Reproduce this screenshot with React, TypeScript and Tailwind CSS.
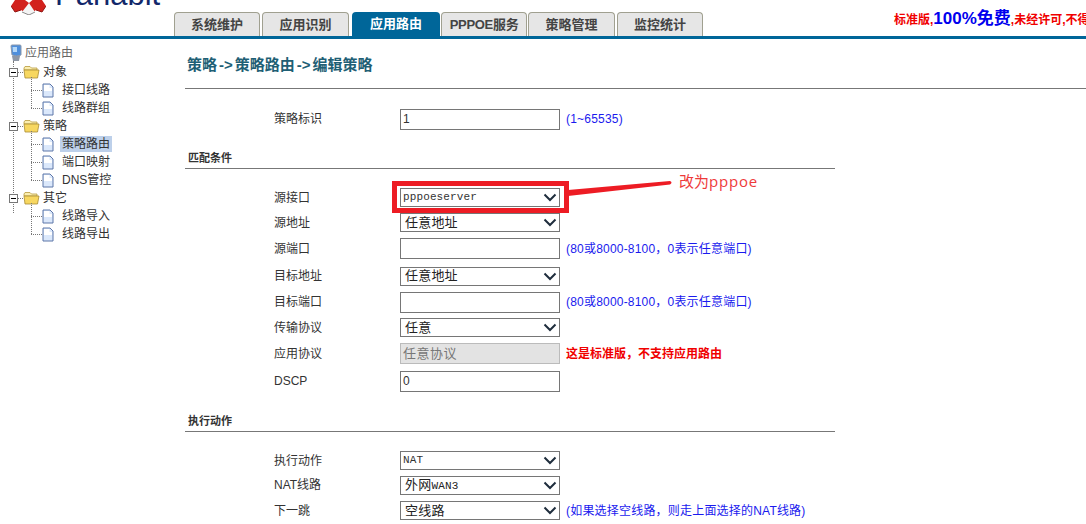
import React from 'react';

const ZH = "font-['Liberation_Sans','Noto_Sans_CJK_SC',sans-serif]";

const tabs = [
  { label: '系统维护', cls: 'w-[86px]' },
  { label: '应用识别', cls: 'w-[87px] ml-[2px]' },
  { label: '应用路由', cls: 'w-[88px] ml-[3px]', active: true },
  { label: 'PPPOE服务', cls: 'w-[86px] ml-[1px] tracking-[-0.3px]' },
  { label: '策略管理', cls: 'w-[87px] ml-[1px]' },
  { label: '监控统计', cls: 'w-[86px] ml-[2px]' },
];

const Logo = () => (
  <svg width="35" height="15" viewBox="0 0 35 15" className="shrink-0">
    <path d="M0 6 L6 -3 H29 L35 6 L31 12 L25 10 L18 15 L10 10 L4 12 Z" fill="#d2211c" />
    <path d="M10 -3 H25 L18 3 Z" fill="#ffffff" />
    <path d="M18 3 L24 12 L18 15 L11 12 Z" fill="#f4f4f4" />
    <path d="M11 12 L18 15 L24 12" fill="none" stroke="#8a8a8a" strokeWidth="1" />
    <path d="M0 6 L4 12 L10 10 M35 6 L31 12 L25 10" fill="none" stroke="#8f1512" strokeWidth="1" />
  </svg>
);

const Minus = () => (
  <span className="relative z-10 w-[9px] h-[9px] border border-[#777] bg-white flex items-center justify-center shrink-0">
    <span className="w-[5px] h-px bg-black" />
  </span>
);

const Folder = () => (
  <svg width="17" height="14" viewBox="0 0 17 14" className="shrink-0">
    <path d="M1 3 L2 1.5 H7 L8.5 3 H14 V5 H1 Z" fill="#fbeeb0" stroke="#b89a3c" strokeWidth="0.8" />
    <path d="M1 5 H16 L14.5 13 H2 Z" fill="#f7d760" stroke="#a88c34" strokeWidth="0.8" />
  </svg>
);

const Page = () => (
  <svg width="12" height="15" viewBox="0 0 12 15" className="shrink-0">
    <path d="M1 1 H8 L11 4 V14 H1 Z" fill="#dbe8fb" stroke="#5d76a8" strokeWidth="1" />
    <path d="M2 2 H7.5 V5 H10 V8 L2 8 Z" fill="#ffffff" />
  </svg>
);

const Computer = () => (
  <svg width="13" height="18" viewBox="0 0 13 18" className="shrink-0">
    <path d="M2 2 Q2 1 3 1 H11 Q12 1 12 2 V11 Q8 13 3 11 Z" fill="#4f8fdc" stroke="#8a97aa" strokeWidth="1" />
    <path d="M3.5 3 H8 V8 H4 Z" fill="#b4d8f8" />
    <path d="M3 12 H11 L10 17 H4 Z" fill="#8f98a6" />
  </svg>
);

const Group = ({ name, items }: { name: string; items: { label: string; selected?: boolean }[] }) => (
  <div>
    <div className="h-[18px] flex items-center">
      <Minus />
      <span className="w-[5px] border-t border-dotted border-[#777]" />
      <Folder />
      <span className="ml-[3px] text-[12px] text-[#333]">{name}</span>
    </div>
    <div className="relative ml-[22px]">
      <span
        className="absolute left-0 -top-[4px] border-l border-dotted border-[#777]"
        style={{ height: items.length * 18 - 5 }}
      />
      {items.map((item) => (
        <div key={item.label} className="h-[18px] flex items-center">
          <span className="w-[11px] border-t border-dotted border-[#777]" />
          <Page />
          <span className={`ml-[6px] px-[2px] text-[12px] leading-[16px] text-[#333] ${item.selected ? 'bg-[#bdd0ea]' : ''}`}>
            {item.label}
          </span>
        </div>
      ))}
    </div>
  </div>
);

const Sidebar = () => (
  <aside className="w-[185px] shrink-0 pl-[9px] pt-[4px]">
    <div className="h-[19px] flex items-center gap-[3px]">
      <Computer />
      <span className="text-[12px] text-[#666]">应用路由</span>
    </div>
    <div className="relative pt-[1px]">
      <span className="absolute left-[4px] -top-[1px] h-[152px] border-l border-dotted border-[#777]" />
      <Group name="对象" items={[{ label: '接口线路' }, { label: '线路群组' }]} />
      <Group name="策略" items={[{ label: '策略路由', selected: true }, { label: '端口映射' }, { label: 'DNS管控' }]} />
      <Group name="其它" items={[{ label: '线路导入' }, { label: '线路导出' }]} />
    </div>
  </aside>
);

const Chevron = () => (
  <svg width="14" height="9" viewBox="0 0 14 9" className="shrink-0">
    <path d="M1.5 1.5 L7 7 L12.5 1.5" fill="none" stroke="#1f2d3d" strokeWidth="2" />
  </svg>
);

const Select = ({ value, mono }: { value: React.ReactNode; mono?: boolean }) => (
  <div className={`w-[160px] h-[19px] border border-[#767676] bg-white flex items-center justify-between pr-[2px] ${mono ? 'pl-[2px]' : 'pl-[4px]'}`}>
    {mono ? (
      <span className="font-['Liberation_Mono',monospace] text-[11px] tracking-[0.12px] text-[#333]">{value}</span>
    ) : (
      <span className="text-[13px] tracking-[0.2px] text-[#222]">{value}</span>
    )}
    <Chevron />
  </div>
);

const TextInput = ({ value }: { value?: string }) => (
  <div className="w-[160px] h-[21px] border border-[#767676] bg-white pl-[2px] text-[12px] leading-[19px] text-[#333]">
    {value}
  </div>
);

const Row = ({ label, h, children, hint, hintRed }: {
  label: string;
  h: string;
  children: React.ReactNode;
  hint?: string;
  hintRed?: boolean;
}) => (
  <div className={`${h} flex items-center pl-[89px]`}>
    <span className="w-[126px] shrink-0 text-[12px] text-[#333]">{label}</span>
    {children}
    {hint && (
      <span className={`ml-[6px] text-[12px] ${hintRed ? 'font-bold text-[#f00000]' : 'tracking-[0.2px] text-[#1a1aee]'}`}>{hint}</span>
    )}
  </div>
);

const Section = ({ title, className }: { title: string; className: string }) => (
  <div className={`w-[650px] h-[22px] border-b border-[#777] pl-[3px] text-[11px] leading-[23px] font-bold text-[#333] ${className}`}>
    {title}
  </div>
);

export default function App() {
  return (
    <div className={`relative w-[1086px] h-[524px] overflow-hidden bg-white ${ZH}`}>
      <header className="h-[39px] border-b-[3px] border-[#006699] flex items-end overflow-hidden">
        <div className="w-[174px] shrink-0 h-[36px] flex items-start pl-[11px] overflow-hidden">
          <Logo />
          <span className="ml-[9px] -mt-[25px] text-[31px] leading-[40px] text-[#12286a]">Panabit</span>
        </div>
        <nav className="flex items-end h-[24px]">
          {tabs.map((t) => (
            <div
              key={t.label}
              className={`${t.cls} h-[24px] flex items-center justify-center rounded-t-[4px] text-[13px] font-bold ${
                t.active
                  ? 'bg-[#006699] text-white'
                  : 'bg-[#e6e6e6] text-[#444] border border-b-0 border-[#a0a090]'
              }`}
            >
              {t.label}
            </div>
          ))}
        </nav>
        <div className="ml-[191px] h-[36px] pt-[6px] whitespace-nowrap text-[12px] font-bold text-[#f00000] flex items-baseline">
          <span>标准版,</span>
          <span className="text-[17px] text-[#0000ee]">100%免费</span>
          <span>,未经许可,不得</span>
        </div>
      </header>

      <div className="flex">
        <Sidebar />
        <main className="flex-1">
          <div className="h-[50px] pl-[2px] border-b border-[#777] pt-[16px] text-[15px] font-bold leading-[20px] text-[#1f5f75]">
            策略<span className="mx-[2px]">-&gt;</span>策略路由<span className="mx-[2px]">-&gt;</span>编辑策略
          </div>
          <div className="mt-[17px]">
            <Row label="策略标识" h="h-[26px]" hint="(1~65535)">
              <TextInput value="1" />
            </Row>
          </div>
          <Section title="匹配条件" className="mt-[15px]" />
          <div className="mt-[16px]">
            <Row label="源接口" h="h-[25px]"><Select value="pppoeserver" mono /></Row>
            <Row label="源地址" h="h-[25px]"><Select value="任意地址" /></Row>
            <Row label="源端口" h="h-[27px]" hint="(80或8000-8100，0表示任意端口)"><TextInput /></Row>
            <Row label="目标地址" h="h-[28px]"><Select value="任意地址" /></Row>
            <Row label="目标端口" h="h-[24px]" hint="(80或8000-8100，0表示任意端口)"><TextInput /></Row>
            <Row label="传输协议" h="h-[27px]"><Select value="任意" /></Row>
            <Row label="应用协议" h="h-[25px]" hint="这是标准版，不支持应用路由" hintRed>
              <div className="w-[160px] h-[21px] border border-[#bbb] bg-[#e3e3e3] pl-[2px] text-[13px] leading-[19px] tracking-[0.5px] text-[#777]">
                任意协议
              </div>
            </Row>
            <Row label="DSCP" h="h-[30px]"><TextInput value="0" /></Row>
          </div>
          <Section title="执行动作" className="mt-[14px]" />
          <div className="mt-[16px]">
            <Row label="执行动作" h="h-[25px]"><Select value="NAT" mono /></Row>
            <Row label="NAT线路" h="h-[24px]">
              <Select value={<>外网<span className="font-['Liberation_Mono',monospace] text-[11px]">WAN3</span></>} />
            </Row>
            <Row label="下一跳" h="h-[27px]" hint="(如果选择空线路，则走上面选择的NAT线路)"><Select value="空线路" /></Row>
          </div>
        </main>
      </div>

      {/* red annotation drawn over the page */}
      <div className="absolute left-[392px] top-[181px] w-[177px] h-[32px] border-[5px] border-[#ed1c24]" />
      <svg className="absolute left-[568px] top-[178px]" width="106" height="20" viewBox="0 0 106 20">
        <path d="M0 12 L102 3 Q105 4.5 102 6.5 L0 18 Z" fill="#ed1c24" />
      </svg>
      <span className="absolute left-[679px] top-[171px] font-['Open_Sans','Noto_Sans_CJK_SC',sans-serif] text-[15px] leading-[20px] text-[#ee3a3a]">
        改为<span className="tracking-[0.8px]">pppoe</span>
      </span>
    </div>
  );
}
